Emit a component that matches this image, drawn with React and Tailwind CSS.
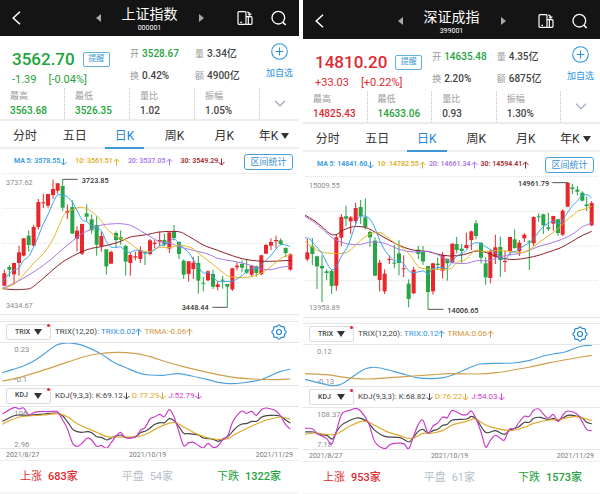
import React from 'react';
import clsx from 'clsx';

const UP = '#e8262b';
const DOWN = '#26a645';

// Candles: x, high, body top, body bottom, low, direction (1 = up)
const shanghai = {
  name: '上证指数',
  code: '000001',
  headerClass: 'pt-1 pb-1',
  maClass: 'gap-2',
  gapClass: 'h-[7px]',
  up: false,
  price: '3562.70',
  change: '-1.39',
  percent: '[-0.04%]',
  open: '3528.67',
  turnover: '0.42%',
  volume: '3.34亿',
  amount: '4900亿',
  high: '3563.68',
  low: '3526.35',
  ratio: '1.02',
  amplitude: '1.05%',
  ma: [
    { label: 'MA 5: 3578.55', up: false },
    { label: '10: 3561.51', up: true },
    { label: '20: 3537.05', up: true },
    { label: '30: 3549.29', up: false },
  ],
  main: {
    viewBox: '0 0 897 424',
    left: 7,
    right: 887,
    grid: [2, 106, 211, 316],
    labels: [
      { x: 18, y: 37, text: '3737.62' },
      { x: 18, y: 406, text: '3434.67' },
    ],
    marks: [
      { line: '188,20 188,19 233,19', x: 245, y: 29, text: '3723.85' },
      { line: '682,403 637,403', x: 545, y: 412, text: '3448.44' },
    ],
    candles: [
      [13, 290, 301, 338, 338, 1], [28, 276, 282, 290, 312, 0], [42, 270, 270, 304, 335, 1],
      [57, 218, 238, 270, 308, 1], [71, 196, 196, 248, 250, 1], [86, 172, 188, 216, 235, 0],
      [101, 155, 162, 218, 220, 1], [115, 78, 87, 162, 170, 1], [130, 62, 88, 90, 105, 1],
      [144, 63, 63, 98, 104, 1], [159, 20, 48, 66, 78, 1], [173, 30, 31, 53, 62, 1],
      [188, 20, 39, 104, 114, 0], [202, 95, 114, 119, 138, 1], [217, 82, 102, 182, 182, 0],
      [231, 160, 173, 197, 235, 1], [246, 152, 153, 242, 246, 1], [260, 94, 121, 131, 146, 0],
      [275, 124, 139, 172, 182, 0], [290, 130, 156, 215, 248, 0], [304, 176, 189, 219, 236, 1],
      [319, 229, 229, 280, 305, 0], [333, 232, 237, 272, 272, 1], [348, 175, 180, 201, 225, 0],
      [362, 172, 192, 200, 215, 0], [377, 215, 219, 266, 308, 0], [391, 238, 246, 270, 308, 1],
      [406, 236, 250, 254, 262, 1], [421, 220, 231, 258, 270, 1], [435, 236, 238, 240, 276, 0],
      [450, 198, 202, 243, 247, 1], [464, 200, 209, 213, 226, 1], [479, 176, 201, 206, 220, 1],
      [493, 182, 201, 215, 220, 0], [508, 178, 178, 227, 240, 1], [522, 156, 175, 195, 202, 0],
      [537, 205, 207, 243, 258, 0], [551, 259, 263, 305, 318, 0], [566, 265, 265, 303, 326, 1],
      [580, 252, 269, 288, 318, 1], [595, 249, 270, 323, 362, 0], [610, 312, 329, 332, 355, 0],
      [624, 292, 295, 322, 325, 1], [639, 290, 303, 341, 348, 0], [653, 325, 334, 342, 352, 1],
      [668, 308, 320, 323, 347, 0], [682, 333, 333, 341, 403, 0], [697, 284, 286, 349, 354, 1],
      [711, 268, 278, 283, 292, 1], [726, 262, 273, 284, 298, 0], [740, 261, 289, 299, 303, 0],
      [755, 278, 278, 305, 311, 1], [769, 278, 280, 300, 311, 0], [784, 245, 247, 304, 306, 1],
      [798, 213, 216, 242, 243, 1], [813, 196, 207, 218, 232, 1], [828, 188, 201, 205, 226, 1],
      [842, 196, 202, 213, 217, 0], [857, 223, 225, 240, 252, 0], [871, 241, 244, 290, 293, 1],
    ],
    lines: [
      { color: '#8f1d27', points: '7,347 42,350 71,349 88,347 101,340 130,316 159,290 188,267 217,250 246,236 275,226 304,221 333,214 362,205 391,192 420,188 450,183 479,177 535,176 566,190 610,216 653,232 697,248 741,260 800,265 871,262' },
      { color: '#a678e8', points: '7,345 42,331 71,315 101,297 130,277 159,254 188,228 217,205 246,182 275,168 304,156 333,153 360,152 391,157 421,173 450,190 479,206 508,210 537,221 580,232 624,243 653,256 690,263 726,270 755,278 784,288 813,290 842,283 871,279' },
      { color: '#e6b422', points: '7,348 42,333 71,305 101,270 130,242 159,198 188,133 202,116 217,110 240,103 260,107 280,120 304,143 319,166 348,190 377,202 406,223 421,232 450,236 479,223 508,224 537,216 566,222 580,228 610,252 639,274 668,298 690,311 740,313 770,306 798,292 828,268 850,252 871,246' },
      { color: '#3ba2ee', points: '7,328 25,305 42,291 57,285 71,262 86,250 101,222 115,190 130,152 145,123 159,90 173,66 188,68 202,71 217,88 231,112 246,140 260,146 275,158 290,166 304,173 319,206 333,222 348,223 362,222 377,234 391,238 406,232 421,233 435,241 450,238 464,230 479,218 493,216 508,206 522,198 537,210 551,226 566,238 580,260 595,282 610,300 624,298 639,312 653,324 668,326 682,325 697,325 711,318 726,308 740,295 755,286 769,288 784,275 798,262 813,247 828,228 842,215 857,216 871,221' },
    ],
  },
  trix: { value: 'TRIX:0.02', signal: 'TRMA:-0.06' },
  trixChart: {
    viewBox: '0 81 897 124',
    labels: [
      { x: 43, y: 107, text: '0.23' },
      { x: 43, y: 198, text: '-0.1' },
    ],
    lines: [
      { color: '#4fa3dc', points: '7,170 40,160 70,150 105,133 145,104 170,87 185,83 205,81 225,83 250,89 300,112 340,138 380,156 420,172 450,177 490,178 535,173 575,180 620,190 660,200 690,203 725,201 780,192 810,180 840,167 871,159' },
      { color: '#cf9f4e', points: '7,195 60,184 120,166 180,146 240,126 290,114 350,109 410,113 450,122 500,138 550,152 600,164 650,175 700,184 760,189 820,191 871,189' },
    ],
  },
  kdj: { k: 'K:69.12', d: 'D:77.29', j: 'J:52.79' },
  kdjChart: {
    viewBox: '0 73 897 125',
    labels: [
      { x: 43, y: 101, text: '106' },
      { x: 43, y: 192, text: '2.96' },
    ],
    lines: [
      { color: '#444444', points: '7,116 40,100 60,97 85,98 120,95 176,92 202,117 218,140 232,147 246,149 262,147 275,150 290,162 304,164 320,172 334,166 348,160 362,157 377,164 406,162 421,150 435,146 450,136 465,125 480,120 494,120 508,108 522,114 537,132 551,152 566,153 595,157 610,166 640,170 655,176 670,168 684,162 698,146 712,132 726,124 742,122 756,116 770,116 784,104 800,99 814,98 828,98 842,101 857,112 871,121' },
      { color: '#dfa928', points: '7,125 30,113 60,103 85,100 130,97 176,93 205,104 232,123 262,137 290,149 320,162 350,163 406,163 440,154 480,132 522,119 551,133 595,156 640,169 684,168 700,158 726,144 756,130 784,118 800,112 842,103 871,110' },
      { color: '#c93cc9', points: '7,94 42,75 57,79 71,76 86,96 101,90 115,87 130,86 144,87 159,86 173,88 188,112 202,138 217,180 231,191 246,182 262,166 275,172 290,191 304,188 319,197 333,181 348,160 362,149 377,165 406,163 421,143 435,135 450,109 464,103 479,95 493,102 508,81 522,102 537,148 551,189 566,180 580,179 595,188 610,196 624,182 639,194 653,191 668,172 684,158 697,120 711,98 726,85 740,92 755,86 769,98 784,81 798,76 813,79 828,85 842,100 857,126 871,139' },
    ],
  },
  counts: { rise: '683家', flat: '54家', fall: '1322家' },
};

const shenzhen = {
  name: '深证成指',
  code: '399001',
  headerClass: 'pt-[7px] pb-1',
  maClass: 'gap-[3px]',
  gapClass: 'h-1.5',
  up: true,
  price: '14810.20',
  change: '+33.03',
  percent: '[+0.22%]',
  open: '14635.48',
  turnover: '2.20%',
  volume: '4.35亿',
  amount: '6875亿',
  high: '14825.43',
  low: '14633.06',
  ratio: '0.93',
  amplitude: '1.30%',
  ma: [
    { label: 'MA 5: 14841.60', up: false },
    { label: '10: 14782.55', up: true },
    { label: '20: 14661.34', up: true },
    { label: '30: 14594.41', up: true },
  ],
  main: {
    viewBox: '9 8 891 423',
    left: 15,
    right: 893,
    grid: [10, 114, 218, 322],
    labels: [
      { x: 27, y: 44, text: '15009.55' },
      { x: 27, y: 411, text: '13958.89' },
    ],
    marks: [
      { line: '803,28 757,28', x: 654, y: 37, text: '14961.79' },
      { line: '384,408 430,408', x: 442, y: 418, text: '14006.65' },
    ],
    candles: [
      [22, 197, 237, 258, 264, 1], [37, 194, 219, 242, 275, 0], [51, 247, 249, 279, 347, 0],
      [66, 246, 278, 285, 386, 0], [80, 288, 294, 299, 320, 0], [95, 290, 293, 338, 362, 0],
      [109, 184, 192, 337, 352, 1], [124, 122, 131, 193, 218, 1], [138, 97, 129, 136, 158, 0],
      [152, 128, 132, 144, 182, 1], [167, 88, 104, 143, 152, 1], [182, 80, 101, 129, 152, 0],
      [196, 75, 132, 161, 168, 0], [210, 172, 176, 192, 220, 0], [225, 192, 202, 307, 308, 0],
      [239, 260, 268, 320, 354, 1], [254, 288, 301, 354, 362, 1], [268, 246, 257, 260, 272, 1],
      [283, 215, 268, 270, 285, 0], [297, 201, 240, 269, 306, 0], [311, 246, 285, 288, 312, 1],
      [326, 318, 331, 377, 402, 0], [341, 280, 289, 360, 362, 1], [355, 218, 229, 242, 258, 0],
      [369, 218, 236, 264, 275, 0], [384, 278, 278, 356, 408, 0], [399, 268, 270, 354, 364, 1],
      [413, 252, 271, 275, 290, 0], [428, 236, 245, 292, 316, 1], [442, 256, 256, 270, 322, 0],
      [457, 210, 211, 268, 270, 1], [470, 191, 212, 230, 240, 0], [485, 212, 226, 233, 270, 0],
      [499, 178, 215, 224, 226, 1], [514, 172, 174, 200, 230, 1], [528, 140, 150, 188, 198, 0],
      [543, 207, 208, 253, 270, 0], [557, 252, 270, 312, 334, 0], [571, 228, 234, 314, 330, 1],
      [586, 184, 222, 251, 272, 1], [601, 190, 221, 260, 311, 0], [615, 232, 263, 266, 296, 1],
      [630, 190, 191, 233, 246, 1], [644, 168, 198, 224, 226, 0], [658, 200, 208, 234, 248, 1],
      [673, 180, 184, 195, 206, 1], [688, 200, 204, 206, 290, 0], [701, 129, 131, 210, 218, 1],
      [716, 120, 129, 131, 146, 0], [730, 121, 123, 156, 182, 0], [745, 118, 162, 167, 173, 0],
      [760, 127, 128, 151, 172, 1], [774, 137, 138, 179, 188, 0], [788, 108, 112, 184, 188, 1],
      [803, 28, 28, 100, 101, 1], [817, 32, 42, 47, 62, 0], [832, 38, 49, 55, 66, 0],
      [847, 54, 58, 82, 84, 0], [860, 70, 93, 98, 113, 0], [875, 83, 89, 156, 158, 1],
    ],
    lines: [
      { color: '#8f1d27', points: '15,125 44,143 66,160 88,180 108,184 130,170 160,160 190,161 210,168 240,185 270,202 297,216 330,228 355,232 385,235 415,243 450,248 490,244 530,233 560,238 590,250 620,257 650,258 700,250 740,238 780,224 815,205 840,190 875,174' },
      { color: '#a678e8', points: '15,129 44,148 66,166 95,192 115,203 145,212 182,213 215,206 254,210 283,222 311,232 345,236 385,234 415,245 450,265 470,270 500,270 530,262 565,262 590,254 620,246 660,240 695,228 720,218 750,210 785,198 815,184 845,162 860,155 875,148' },
      { color: '#e6b422', points: '15,205 44,226 66,236 100,240 138,238 160,222 182,201 210,182 240,178 260,190 283,208 311,226 330,246 348,271 362,284 399,288 450,286 464,275 475,265 495,260 510,245 528,230 550,235 590,231 630,234 665,238 695,225 720,205 745,188 775,165 800,140 820,125 835,112 855,107 875,99' },
      { color: '#3ba2ee', points: '15,192 30,198 44,214 66,240 80,268 95,289 109,280 124,250 145,215 160,172 174,135 185,128 200,130 212,140 225,165 239,200 254,230 268,248 283,262 297,262 311,272 326,292 341,298 370,293 384,303 399,286 428,282 442,284 464,255 479,243 495,235 510,217 525,209 540,210 560,222 575,230 590,240 601,254 618,256 630,240 650,233 670,218 690,207 701,196 716,176 730,160 745,150 760,144 780,150 795,130 815,100 832,83 845,68 858,64 867,67 875,75' },
    ],
  },
  trix: { value: 'TRIX:0.12', signal: 'TRMA:0.06' },
  trixChart: {
    viewBox: '9 85 891 123',
    labels: [
      { x: 51, y: 112, text: '0.12' },
      { x: 51, y: 201, text: '-0.13' },
    ],
    lines: [
      { color: '#4fa3dc', points: '15,188 50,197 85,205 105,207 125,202 150,186 175,168 195,157 215,152 240,154 280,164 320,175 350,183 390,186 430,183 460,174 500,157 540,142 600,140 640,139 690,131 730,118 760,112 795,106 835,91 855,87 875,86' },
      { color: '#cf9f4e', points: '15,171 80,174 120,180 160,185 210,187 270,183 340,178 400,174 450,171 530,172 590,168 640,160 690,151 750,138 810,127 875,116' },
    ],
  },
  kdj: { k: 'K:68.82', d: 'D:76.22', j: 'J:54.03' },
  kdjChart: {
    viewBox: '9 78 891 124',
    labels: [
      { x: 51, y: 105, text: '108.37' },
      { x: 51, y: 195, text: '7.18' },
    ],
    lines: [
      { color: '#444444', points: '15,150 40,150 60,158 80,160 97,171 110,148 124,130 150,115 170,108 185,110 205,122 225,146 254,163 300,167 326,180 340,166 355,148 369,142 384,154 399,146 413,142 428,130 442,127 457,114 500,111 514,103 530,112 557,151 586,146 613,157 630,144 655,135 673,121 688,121 701,109 720,106 745,113 760,109 774,116 803,100 830,102 847,108 860,121 875,125' },
      { color: '#dfa928', points: '15,157 45,153 75,157 105,158 124,148 150,132 185,118 205,120 230,133 260,149 297,160 333,170 370,154 399,153 428,146 457,129 500,118 525,111 555,128 580,137 630,146 673,136 701,124 745,114 774,113 820,104 850,108 875,116' },
      { color: '#c93cc9', points: '15,139 37,140 51,154 66,162 80,170 95,186 109,148 124,98 138,88 152,84 167,79 182,87 205,122 225,180 254,200 268,189 283,184 311,185 326,200 341,162 355,127 369,115 384,153 399,132 413,123 428,105 442,107 457,85 485,98 500,98 514,87 528,110 543,150 557,195 571,175 586,160 600,168 613,174 628,142 643,140 658,120 673,103 688,103 701,85 716,81 730,96 745,109 760,97 774,118 788,100 803,87 832,97 847,120 860,142 875,146' },
    ],
  },
  counts: { rise: '953家', flat: '61家', fall: '1573家' },
};

const MA_COLORS = ['text-[#2f9be0]', 'text-[#dfae25]', 'text-[#a678e8]', 'text-[#a31f2b]'];
const TABS = ['分时', '五日', '日K', '周K', '月K'];

// Catmull-Rom through the points, written as cubic segments
function smooth(points) {
  const p = points.split(' ').map((s) => s.split(',').map(Number));
  let d = `M${p[0][0]} ${p[0][1]}`;
  for (let i = 0; i < p.length - 1; i++) {
    const a = p[i - 1] || p[i];
    const b = p[i];
    const c = p[i + 1];
    const e = p[i + 2] || c;
    d += `C${b[0] + (c[0] - a[0]) / 6} ${b[1] + (c[1] - a[1]) / 6} ${c[0] - (e[0] - b[0]) / 6} ${c[1] - (e[1] - b[1]) / 6} ${c[0]} ${c[1]}`;
  }
  return d;
}

// Scalloped outline with eight lobes
const GEAR = (() => {
  const pts = [];
  for (let i = 0; i < 96; i++) {
    const t = (i / 96) * Math.PI * 2;
    const r = 19.5 + 1.8 * Math.cos(8 * t);
    pts.push(`${(24 + r * Math.sin(t)).toFixed(1)} ${(24 - r * Math.cos(t)).toFixed(1)}`);
  }
  return `M${pts.join('L')}Z`;
})();

function Arrow({ up }) {
  return (
    <svg viewBox="0 0 7 8" className="h-2 w-[7px]" fill="none" stroke="currentColor" aria-hidden="true">
      <path d={up ? 'M3.5 7.5V1M.6 3.9 3.5 1l2.9 2.9' : 'M3.5.5V7M.6 4.1 3.5 7l2.9-2.9'} />
    </svg>
  );
}

function Triangle({ className }) {
  return (
    <svg viewBox="0 0 8 6" className={clsx('h-1.5 w-2', className)} fill="currentColor" aria-hidden="true">
      <path d="M0 0h8L4 6z" />
    </svg>
  );
}

function Header({ data }) {
  return (
    <header
      className={clsx(
        'grid grid-cols-[1fr_auto_1fr] items-center bg-[#141414] px-3 text-white',
        data.headerClass
      )}
    >
      <button type="button" aria-label="返回" className="justify-self-start">
        <svg viewBox="0 0 9 14" className="h-3.5 w-[9px]" fill="none" stroke="currentColor" strokeWidth="1.5">
          <path d="M8 .7 1.2 7 8 13.3" />
        </svg>
      </button>
      <div className="flex items-center gap-[21px]">
        <button type="button" aria-label="上一个">
          <svg viewBox="0 0 5 8" className="h-2 w-[5px]" fill="#a8a8a8">
            <path d="M5 0v8L0 4z" />
          </svg>
        </button>
        <div className="text-center">
          <h1 className="text-[14px] leading-5 font-normal">{data.name}</h1>
          <p className="text-[7px] leading-2">{data.code}</p>
        </div>
        <button type="button" aria-label="下一个">
          <svg viewBox="0 0 5 8" className="h-2 w-[5px]" fill="#a8a8a8">
            <path d="M0 0v8l5-4z" />
          </svg>
        </button>
      </div>
      <div className="flex items-center gap-[18px] justify-self-end">
        <button type="button" aria-label="横屏">
          <svg viewBox="0 0 48 48" className="size-4" fill="none" stroke="currentColor" strokeWidth="3.5">
            <rect x="3" y="5" width="24" height="38" rx="3" />
            <path d="M10 37h5M27 20h15a3 3 0 0 1 3 3v17a3 3 0 0 1-3 3H27M34 20v23M30 6c5 0 8 3 8 8M33 12l5 4 5-5" />
          </svg>
        </button>
        <button type="button" aria-label="搜索">
          <svg viewBox="0 0 48 48" className="size-4" fill="none" stroke="currentColor" strokeWidth="4">
            <circle cx="22" cy="23" r="19" />
            <path d="m35 36 9 9" strokeWidth="5" />
          </svg>
        </button>
      </div>
    </header>
  );
}

function Field({ label, value, className }) {
  return (
    <p className="flex items-center gap-[3px] leading-3">
      <span className="text-[9px] text-[#9a9a9a]">{label}</span>
      <span className={clsx('text-[10px] font-medium', className)}>{value}</span>
    </p>
  );
}

function Stat({ label, value, className }) {
  return (
    <div className="border-r border-dotted border-[#c4c4c4] pl-2.5">
      <p className="pt-px text-[9px] leading-[14px] text-[#9a9a9a]">{label}</p>
      <p className={clsx('text-[10px] leading-4 font-medium', className)}>{value}</p>
    </div>
  );
}

function Quote({ data }) {
  const trend = data.up ? 'text-[#e02a30]' : 'text-[#1fa33c]';
  return (
    <section className="grid grid-cols-[65fr_65fr_65fr_65fr_39fr] border-b-2 border-[#ececec] text-[#444]">
      <div className="col-span-2 pt-3 pl-3">
        <div className="flex items-center gap-2">
          <span className={clsx('text-[17px] leading-[22px] font-medium', trend)}>{data.price}</span>
          <button
            type="button"
            className="h-[15px] w-[27px] rounded-[2px] border border-[#63afe2] text-[8px] leading-3 text-[#3b9bdc]"
          >
            提醒
          </button>
        </div>
        <p className={clsx('flex gap-3 pt-[3px] text-[11px] leading-[14px]', trend)}>
          <span>{data.change}</span>
          <span>{data.percent}</span>
        </p>
      </div>
      <div className="flex flex-col gap-2.5 pt-3">
        <Field label="开" value={data.open} className="text-[#1fa33c]" />
        <Field label="换" value={data.turnover} />
      </div>
      <div className="flex flex-col gap-2.5 pt-3">
        <Field label="量" value={data.volume} />
        <Field label="额" value={data.amount} />
      </div>
      <button type="button" className="flex flex-col items-center pt-[7px] text-[#2f93dc]">
        <svg viewBox="0 0 48 48" className="size-[17px]" fill="none" stroke="currentColor" strokeWidth="3">
          <circle cx="24" cy="24" r="22" />
          <path d="M24 13v22M13 24h22" />
        </svg>
        <span className="pt-1.5 text-[9px] leading-[14px] whitespace-nowrap">加自选</span>
      </button>
      <div className="col-span-5 grid grid-cols-subgrid pt-px">
        <Stat label="最高" value={data.high} className={trend} />
        <Stat label="最低" value={data.low} className="text-[#1fa33c]" />
        <Stat label="量比" value={data.ratio} />
        <Stat label="振幅" value={data.amplitude} />
        <button type="button" aria-label="展开" className="flex items-center justify-center text-[#a3b0c4]">
          <svg viewBox="0 0 12 7" className="h-[7px] w-3" fill="none" stroke="currentColor" strokeWidth="1.3">
            <path d="m1 .8 5 5 5-5" />
          </svg>
        </button>
      </div>
    </section>
  );
}

function Tabs() {
  return (
    <nav className="grid h-7 grid-cols-6 border-b-2 border-[#eeeeee] text-[12px] text-[#333]">
      {TABS.map((tab) => (
        <button
          key={tab}
          type="button"
          className={clsx(
            '-mb-0.5 mx-[5px] border-b-2 pt-[3px] whitespace-nowrap',
            tab === '日K' ? 'border-[#3f97d8] text-[#2386d8]' : 'border-transparent'
          )}
        >
          {tab}
        </button>
      ))}
      <button type="button" className="flex items-center justify-center gap-[3px] pt-[3px] whitespace-nowrap">
        年K
        <Triangle />
      </button>
    </nav>
  );
}

function Averages({ items, className }) {
  return (
    <div className="flex h-6 items-center justify-between pt-px pr-1.5 pl-3.5">
      <div className={clsx('flex text-[7px] font-semibold', className)}>
        {items.map((item, i) => (
          <span key={item.label} className={clsx('flex items-center whitespace-nowrap', MA_COLORS[i])}>
            {item.label}
            <Arrow up={item.up} />
          </span>
        ))}
      </div>
      <button
        type="button"
        className="h-4 w-[49px] rounded-[3px] border border-[#4a9fd6] text-[9px] leading-3 whitespace-nowrap text-[#3590d0]"
      >
        区间统计
      </button>
    </div>
  );
}

function CandleChart({ chart }) {
  return (
    <svg viewBox={chart.viewBox} className="block w-full" role="img" aria-label="日K线图">
      {chart.grid.map((y) => (
        <line key={y} x1={chart.left} x2={chart.right} y1={y} y2={y} stroke="#dedede" strokeWidth="3" strokeDasharray="3 3" />
      ))}
      {chart.labels.map((l) => (
        <text key={l.text} x={l.x} y={l.y} fontSize="22" fill="#8c8c8c">
          {l.text}
        </text>
      ))}
      {chart.candles.map(([x, high, top, bottom, low, up]) => (
        <g key={x} fill={up ? UP : DOWN}>
          <rect x={x - 1.5} y={high} width="3" height={low - high} />
          <rect x={x - 6} y={top} width="12" height={Math.max(bottom - top, 3)} />
        </g>
      ))}
      {chart.lines.map((l) => (
        <path key={l.color} d={smooth(l.points)} fill="none" stroke={l.color} strokeWidth="3" />
      ))}
      {chart.marks.map((m) => (
        <g key={m.text}>
          <polyline points={m.line} fill="none" stroke="#555555" strokeWidth="3" />
          <text x={m.x} y={m.y} fontSize="22" fontWeight="500" fill="#333333">
            {m.text}
          </text>
        </g>
      ))}
    </svg>
  );
}

function LineChart({ chart, label }) {
  return (
    <svg viewBox={chart.viewBox} className="block w-full" role="img" aria-label={label}>
      {chart.labels.map((l) => (
        <text key={l.text} x={l.x} y={l.y} fontSize="23" fill="#8c8c8c">
          {l.text}
        </text>
      ))}
      {chart.lines.map((l) => (
        <path key={l.color} d={smooth(l.points)} fill="none" stroke={l.color} strokeWidth="3.5" />
      ))}
    </svg>
  );
}

function IndicatorRow({ value, children }) {
  return (
    <div className="flex h-[22px] items-center gap-1 border-y border-[#e6e6e6] pr-3 pl-1.5 text-[#444]">
      <div className="relative">
        <select
          aria-label="指标"
          defaultValue={value}
          className="block h-4 w-[45px] appearance-none rounded-[2px] border border-[#dcdcdc] bg-white pl-2 text-[7px] font-medium"
        >
          <option>TRIX</option>
          <option>KDJ</option>
        </select>
        <Triangle className="pointer-events-none absolute top-[5px] right-[9px] text-[#333]" />
        <span className="absolute top-0 right-px size-[3px] rounded-full bg-[#e8262b]" />
      </div>
      {children}
    </div>
  );
}

function Reading({ text, up, className }) {
  return (
    <span className={clsx('flex items-center', className)}>
      {text}
      <Arrow up={up} />
    </span>
  );
}

function Panel({ data }) {
  return (
    <main className="flex min-w-0 flex-col bg-white">
      <Header data={data} />
      <Quote data={data} />
      <Tabs />
      <Averages items={data.ma} className={data.maClass} />
      <CandleChart chart={data.main} />
      <div className={clsx('border-t border-[#e6e6e6] bg-[#fcfcfc]', data.gapClass)} />

      <IndicatorRow value="TRIX">
        <div className="flex gap-0.5 text-[8px] whitespace-nowrap">
          <span>TRIX(12,20):</span>
          <Reading text={data.trix.value} up className="text-[#2f93dc]" />
          <Reading text={data.trix.signal} up className="text-[#cf9438]" />
        </div>
        <button type="button" aria-label="指标设置" className="ml-auto text-[#2386d8]">
          <svg viewBox="0 0 48 48" className="size-4" fill="none" stroke="currentColor" strokeWidth="3.5">
            <path d={GEAR} />
            <circle cx="24" cy="24" r="7.5" />
          </svg>
        </button>
      </IndicatorRow>
      <LineChart chart={data.trixChart} label="TRIX" />

      <IndicatorRow value="KDJ">
        <div className="flex gap-0.5 text-[8px] whitespace-nowrap">
          <span>KDJ(9,3,3):</span>
          <Reading text={data.kdj.k} />
          <Reading text={data.kdj.d} className="text-[#dfa928]" />
          <Reading text={data.kdj.j} className="text-[#c93cc9]" />
        </div>
      </IndicatorRow>
      <LineChart chart={data.kdjChart} label="KDJ" />

      <div className="flex h-3 items-center justify-between border-t border-[#e6e6e6] px-1.5 text-[7px] text-[#777]">
        <time>2021/8/27</time>
        <time>2021/10/19</time>
        <time>2021/11/29</time>
      </div>
      <div className="flex h-8 items-center justify-between border-t border-[#eeeeee] pr-[18px] pl-5 text-[11px]">
        <p className="flex gap-1.5 text-[#e02a30]">
          上涨 <span className="font-medium">{data.counts.rise}</span>
        </p>
        <p className="flex gap-1.5 text-[#b4bfca]">
          平盘 <span>{data.counts.flat}</span>
        </p>
        <p className="flex gap-1.5 text-[#1fa33c]">
          下跌 <span className="font-medium">{data.counts.fall}</span>
        </p>
      </div>
      <div className="min-h-1 flex-1 bg-[#f4f4f4]" />
    </main>
  );
}

export default function App() {
  return (
    <div className="grid min-h-screen grid-cols-[299fr_297fr] gap-1 bg-white font-['Roboto','Noto_Sans_CJK_SC',sans-serif]">
      <Panel data={shanghai} />
      <Panel data={shenzhen} />
    </div>
  );
}
